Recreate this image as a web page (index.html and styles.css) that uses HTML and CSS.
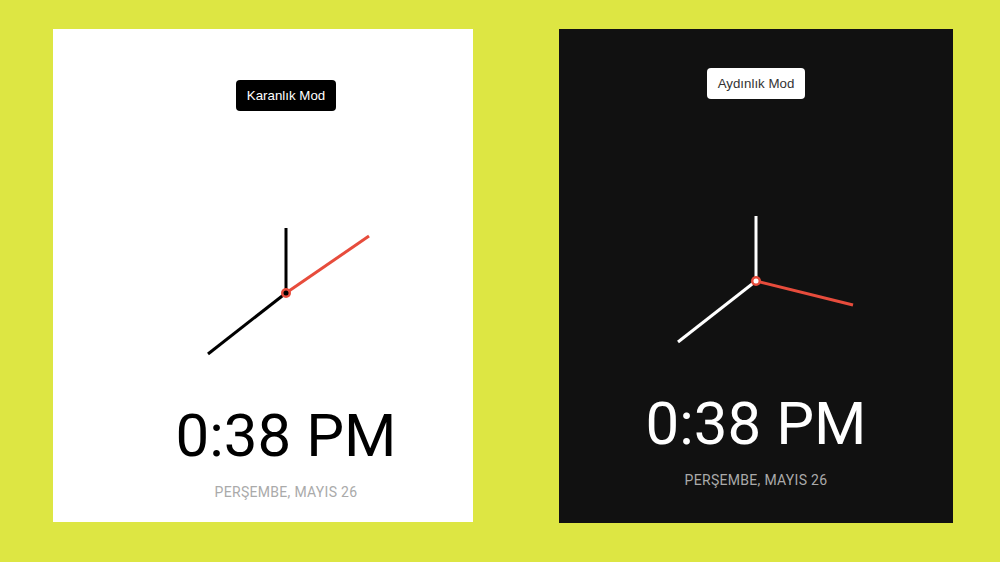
FILE: index.html
```html
<!DOCTYPE html>
<html lang="tr">
<head>
<meta charset="utf-8">
<link rel="stylesheet" href="styles.css">
</head>
<body>
<div class="stage">
  <section class="card card-light">
    <button class="toggle toggle-dark">Karanlık Mod</button>
    <svg class="clock" viewBox="0 0 200 200" width="200" height="200">
      <line x1="100" y1="100" x2="100" y2="35" class="hand hand-main"/>
      <line x1="100" y1="100" x2="22" y2="161" class="hand hand-main"/>
      <line x1="100" y1="100" x2="183" y2="43" class="hand hand-sec"/>
      <circle cx="100" cy="100" r="5" class="dot-outer"/>
      <circle cx="100" cy="100" r="2.5" class="dot-inner"/>
    </svg>
    <div class="time">0:38 PM</div>
    <div class="date">Perşembe, Mayıs 26</div>
  </section>
  <section class="card card-dark">
    <button class="toggle toggle-light">Aydınlık Mod</button>
    <svg class="clock" viewBox="0 0 200 200" width="200" height="200">
      <line x1="100" y1="100" x2="100" y2="35" class="hand hand-main"/>
      <line x1="100" y1="100" x2="22" y2="161" class="hand hand-main"/>
      <line x1="100" y1="100" x2="197" y2="124" class="hand hand-sec"/>
      <circle cx="100" cy="100" r="5" class="dot-outer"/>
      <circle cx="100" cy="100" r="2.5" class="dot-inner"/>
    </svg>
    <div class="time">0:38 PM</div>
    <div class="date">PERŞEMBE, MAYIS 26</div>
  </section>
</div>
</body>
</html>
```
FILE: styles.css
```css
html, body {
  margin: 0;
  padding: 0;
}
body {
  background: #dde643;
  width: 1000px;
  height: 562px;
  overflow: hidden;
  font-family: Roboto, "Liberation Sans", sans-serif;
}
.stage {
  display: flex;
  align-items: flex-start;
  gap: 86px;
  padding: 29px 0 0 53px;
}
.card {
  box-sizing: border-box;
  display: flex;
  flex-direction: column;
  align-items: center;
}
.card-light {
  width: 420px;
  height: 493px;
  background: #fff;
  padding: 51px 0 0 46px;
  --fg: #000;
}
.card-dark {
  width: 394px;
  height: 494px;
  background: #111;
  padding: 39px 0 0 0;
  --fg: #fff;
}
.toggle {
  font-family: "Liberation Sans", Arial, sans-serif;
  font-size: 13.3px;
  height: 31px;
  padding: 0 11px;
  border: 0;
  border-radius: 4px;
  cursor: pointer;
}
.toggle-dark {
  background: #000;
  color: #fff;
}
.toggle-light {
  background: #fff;
  color: #333;
}
.clock {
  display: block;
  margin-top: 82px;
}
.hand {
  stroke-width: 3;
  stroke-linecap: butt;
}
.hand-main {
  stroke: var(--fg);
}
.hand-sec {
  stroke: #e74c3c;
}
.dot-outer {
  fill: #e74c3c;
}
.dot-inner {
  fill: var(--fg);
}
.time {
  color: var(--fg);
  font-size: 60px;
  line-height: 70px;
  margin-top: 8px;
}
.date {
  color: #aaa;
  font-size: 14px;
  letter-spacing: 0.3px;
  text-transform: uppercase;
  margin-top: 13px;
}
```
